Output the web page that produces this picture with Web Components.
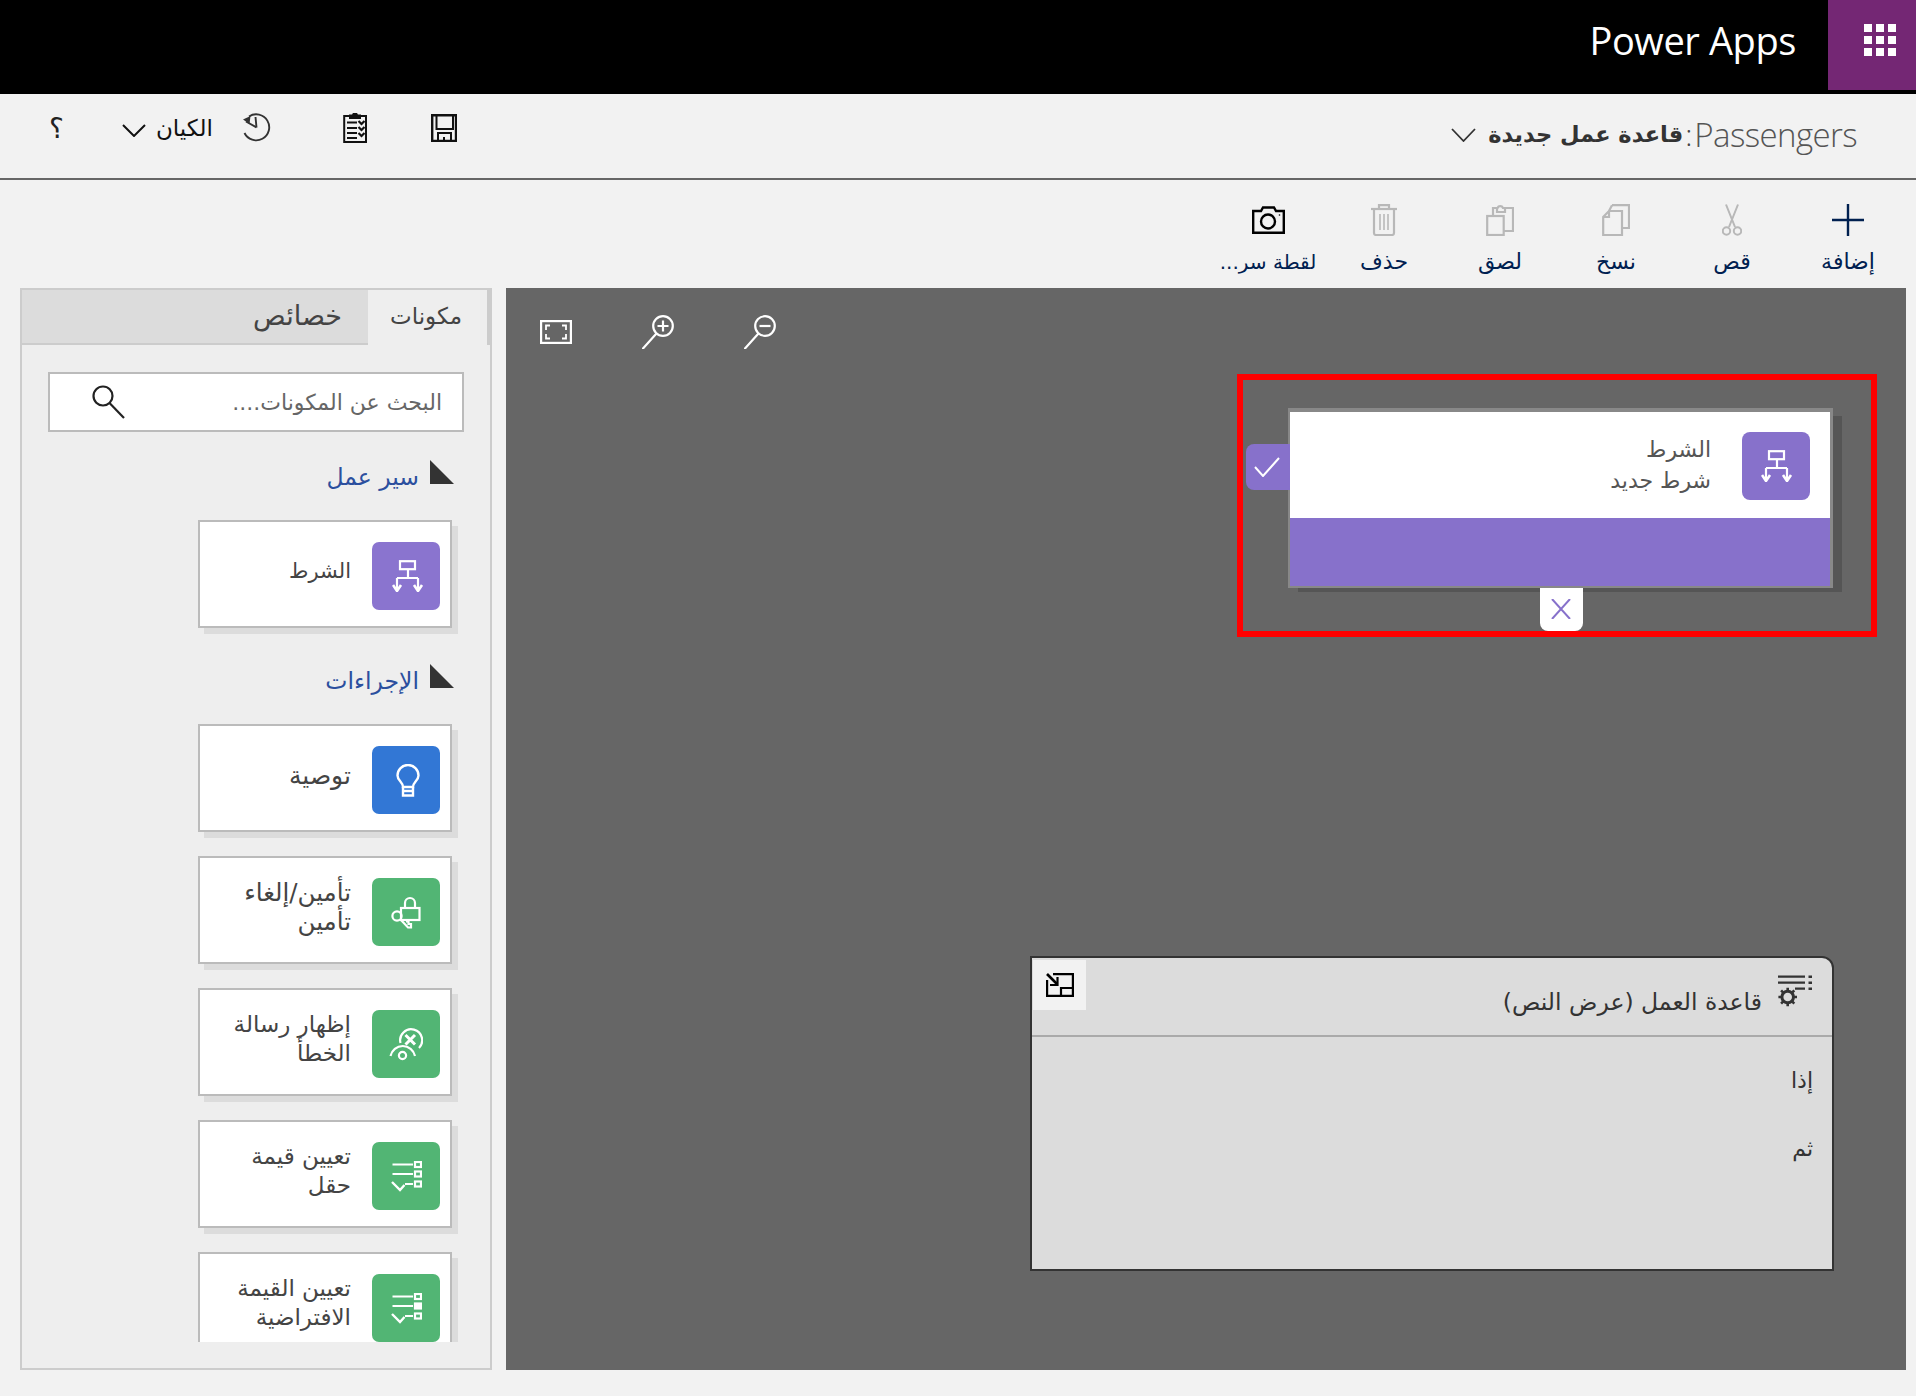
<!DOCTYPE html>
<html lang="ar">
<head>
<meta charset="utf-8">
<title>Power Apps</title>
<style>
  html, body { margin: 0; height: 100%; }
  body {
    width: 1916px;
    height: 1396px;
    overflow: hidden;
    background: #f2f2f2;
    font-family: 'DejaVu Sans', 'Open Sans', sans-serif;
  }
  svg { display: block; }
</style>
</head>
<body>
<pa-header>Power Apps</pa-header>

<pa-titlebar entity="Passengers" name="قاعدة عمل جديدة">
  <svg slot="tools" width="26" height="28" viewBox="0 0 26 28" fill="none" stroke="#111" stroke-width="2.4">
    <path d="M1.2 1.2H25V27H1.2Z"/>
    <path d="M5.5 1.2V15H22V1.2" stroke-width="2"/>
    <path d="M7 27V19H20V27M13 23V27" stroke-width="2"/>
  </svg>
  <svg slot="tools" width="24" height="30" viewBox="0 0 24 30" fill="none" stroke="#111" stroke-width="2">
    <path d="M7 3H1.2V29H23V3H17"/>
    <path d="M7 5V2.5H10A2 2 0 0 1 14 2.5H17V5Z" fill="#111"/>
    <path d="M4 9.5H14M4 15H14M4 20H14M4 25H14" stroke-width="1.8"/>
    <path d="M15.5 8l3 3 3-3M15.5 14l3 3 3-3M15.5 20l3 3 3-3" stroke-width="2.2"/>
  </svg>
  <svg slot="tools" style="margin-right: 7px" width="30" height="30" viewBox="0 0 30 30" fill="none" stroke="#333" stroke-width="1.9">
    <path d="M7 3.5A13 13 0 1 1 2.5 20"/>
    <path d="M14.5 14.5L13.5 4M14.5 14.5L4 8.5"/>
    <path d="M1 6.5L8.5 3L7.5 11Z" fill="#333" stroke="none"/>
  </svg>
  <span slot="entity">الكيان</span>
  <span slot="help">؟</span>
</pa-titlebar>

<pa-commandbar>
  <pa-command label="إضافة">
    <svg width="32" height="32" viewBox="0 0 32 32" stroke="#002050" stroke-width="2.4"><path d="M16 0V32M0 16H32"/></svg>
  </pa-command>
  <pa-command label="قص">
    <svg width="20" height="32" viewBox="0 0 20 32" fill="none" stroke="#b8b8b8" stroke-width="2">
      <path d="M4 0.5L13 23M16 0.5L7 23"/>
      <circle cx="4.5" cy="27" r="3.7"/>
      <circle cx="15.5" cy="27" r="3.7"/>
    </svg>
  </pa-command>
  <pa-command label="نسخ">
    <svg width="28" height="32" viewBox="0 0 28 32" fill="none" stroke="#b8b8b8" stroke-width="2.2">
      <path d="M10 1.2H27V24H20"/>
      <path d="M10 1.2L7 7"/>
      <path d="M7 7H20V31H1.2V13Z"/>
      <path d="M7 7V13H1.2"/>
    </svg>
  </pa-command>
  <pa-command label="لصق">
    <svg width="28" height="32" viewBox="0 0 28 32" fill="none" stroke="#b8b8b8" stroke-width="2.2">
      <path d="M7 12V4H11.5A3 3 0 0 1 17 4H27V27H18"/>
      <path d="M11 4V8H19V4"/>
      <rect x="1.2" y="12" width="16.5" height="19"/>
    </svg>
  </pa-command>
  <pa-command label="حذف">
    <svg width="26" height="32" viewBox="0 0 26 32" fill="none" stroke="#b8b8b8" stroke-width="2.2">
      <path d="M0 5H26"/>
      <path d="M8 5V1.2H18V5"/>
      <path d="M3 5V29A2 2 0 0 0 5 31H21A2 2 0 0 0 23 29V5"/>
      <path d="M9 10V26M13 10V26M17 10V26" stroke-width="1.6"/>
    </svg>
  </pa-command>
  <pa-command label="لقطة سر..." style="font-size: 20px">
    <svg width="33" height="28" viewBox="0 0 33 28" fill="none" stroke="#000" stroke-width="2.4">
      <path d="M1.2 5H9L11 1.5H22L24 5H31.8V26.8H1.2Z"/>
      <circle cx="16" cy="15.5" r="7"/>
      <circle cx="27.5" cy="9" r="0.8" fill="#000" stroke="none"/>
    </svg>
  </pa-command>
</pa-commandbar>

<pa-main>
  <pa-panel slot="panel">
    <pa-section title="سير عمل">
      <pa-card color="#8a74cf" text="الشرط" style="font-size: 21px">
        <svg style="margin-left: 3px" width="32" height="32" viewBox="0 0 32 32" fill="none" stroke="#fff" stroke-width="2.2">
          <rect x="8" y="1.2" width="15" height="8"/>
          <path d="M16 9V18M5 18H26M5 18V30M26 18V30"/>
          <path d="M1 25l4 6 4-6M22 25l4 6 4-6" stroke-width="2.6"/>
        </svg>
      </pa-card>
    </pa-section>
    <pa-section title="الإجراءات">
      <pa-card color="#3277d5" text="توصية" style="font-size: 25px">
        <svg style="margin-left: 3px" width="24" height="33" viewBox="0 0 24 33" fill="none" stroke="#fff" stroke-width="2.4">
          <path d="M7 23C7 18 1.5 16.5 1.5 11.5A10.5 10.5 0 0 1 22.5 11.5C22.5 16.5 17 18 17 23Z"/>
          <path d="M7 23V31.5H17V23M7 27H17"/>
        </svg>
      </pa-card>
      <pa-card color="#52b574" text="تأمين/إلغاء<br>تأمين" style="font-size: 24.5px">
        <svg width="30" height="33" viewBox="0 0 30 33" fill="none" stroke="#fff" stroke-width="2.2">
          <rect x="10" y="12" width="18.5" height="12"/>
          <path d="M14 12V7A5 5 0 0 1 24 7V12"/>
          <circle cx="6" cy="20" r="4.6"/>
          <path d="M9.5 23.5L17 31.5H20V28H17.5V25.5H15"/>
        </svg>
      </pa-card>
      <pa-card color="#52b574" text="إظهار رسالة<br>الخطأ">
        <svg width="34" height="33" viewBox="0 0 34 33" fill="none" stroke="#fff" stroke-width="2.2">
          <path d="M11.5 15A11 11 0 1 1 30 20"/>
          <path d="M16.5 7L26 16.5M26 7L16.5 16.5" stroke-width="3"/>
          <path d="M1.5 28A12.5 12.5 0 0 1 26 28"/>
          <circle cx="13.5" cy="27.5" r="3.6"/>
        </svg>
      </pa-card>
      <pa-card color="#52b574" text="تعيين قيمة<br>حقل">
        <svg width="31" height="31" viewBox="0 0 31 31" fill="none" stroke="#fff" stroke-width="2.2">
          <path d="M1.5 3.5H22M1.5 13H22M14 23H22"/>
          <path d="M1 21L9 29L13.5 24" stroke-width="2.4"/>
          <rect x="24" y="1" width="6" height="5"/>
          <rect x="24" y="10.5" width="6" height="5"/>
          <rect x="24" y="20.5" width="6" height="5"/>
        </svg>
      </pa-card>
      <pa-card color="#52b574" text="تعيين القيمة<br>الافتراضية">
        <svg width="31" height="31" viewBox="0 0 31 31" fill="none" stroke="#fff" stroke-width="2.2">
          <path d="M1.5 3.5H22M1.5 13H22M14 23H22"/>
          <path d="M1 21L9 29L13.5 24" stroke-width="2.4"/>
          <rect x="24" y="1" width="6" height="5"/>
          <rect x="24" y="10.5" width="6" height="5" fill="#fff"/>
          <rect x="24" y="20.5" width="6" height="5"/>
        </svg>
      </pa-card>
    </pa-section>
  </pa-panel>

  <pa-canvas slot="canvas">
    <pa-node title="الشرط" subtitle="شرط جديد">
      <svg style="margin-left: 2px" width="32" height="32" viewBox="0 0 32 32" fill="none" stroke="#fff" stroke-width="2.2">
        <rect x="8" y="1.2" width="15" height="8"/>
        <path d="M16 9V18M5 18H26M5 18V30M26 18V30"/>
        <path d="M1 25l4 6 4-6M22 25l4 6 4-6" stroke-width="2.6"/>
      </svg>
    </pa-node>
    <pa-rule title="قاعدة العمل (عرض النص)">
      <span>إذا</span>
      <span>ثم</span>
    </pa-rule>
  </pa-canvas>
</pa-main>

<script>
class PaHeader extends HTMLElement {
  constructor () {
    super()
    this.attachShadow({ mode: 'open' })
  }

  connectedCallback () {
    let cells = ''
    for (let y = 0; y < 3; y++) {
      for (let x = 0; x < 3; x++) {
        cells += `<rect x="${x * 12}" y="${y * 12}" width="8" height="8"/>`
      }
    }
    this.shadowRoot.innerHTML = /* html */`
      <style>
        :host {
          display: flex;
          justify-content: flex-end;
          height: 94px;
          background: #000;
          color: #fff;
        }
        .name {
          font: 38px/80px 'Open Sans', sans-serif;
          margin-right: 32px;
          letter-spacing: -0.4px;
        }
        .waffle {
          box-sizing: border-box;
          width: 88px;
          height: 90px;
          padding: 0 0 10px 16px;
          background: #742774;
          display: flex;
          align-items: center;
          justify-content: center;
        }
      </style>
      <div class="name"><slot></slot></div>
      <div class="waffle"><svg width="32" height="32" viewBox="0 0 32 32" fill="#fff">${cells}</svg></div>
    `
  }
}

class PaTitlebar extends HTMLElement {
  constructor () {
    super()
    this.attachShadow({ mode: 'open' })
  }

  connectedCallback () {
    this.shadowRoot.innerHTML = /* html */`
      <style>
        :host {
          display: flex;
          justify-content: space-between;
          box-sizing: border-box;
          height: 86px;
          border-bottom: 2px solid #666;
          background: #f2f2f2;
        }
        .left {
          display: flex;
          flex-direction: row-reverse;
          align-items: center;
          padding: 0 0 16px 49px;
        }
        .tools { display: flex; flex-direction: row-reverse; align-items: center; gap: 64px; margin-left: 29px; }
        ::slotted(svg) { display: block; }
        .entity { display: flex; direction: rtl; align-items: center; gap: 10px; font-size: 23px; color: #111; }
        .entity svg { margin-top: 4px; }
        .help { font-size: 28px; color: #222; margin-right: 58px; }
        .right {
          direction: rtl;
          display: flex;
          align-items: center;
          padding-right: 59px;
          padding-bottom: 4px;
          color: #333;
        }
        .entity-name { font: 300 33px 'Open Sans', sans-serif; color: #555; letter-spacing: -0.6px; }
        .colon { font: 300 30px 'Open Sans', sans-serif; color: #444; margin: 0 2px; }
        .rule-name { font-size: 22.5px; font-weight: 700; color: #333; }
        .right svg { margin-right: 12px; margin-top: 2px; }
      </style>
      <div class="left">
        <div class="tools"><slot name="tools"></slot></div>
        <div class="entity">
          <slot name="entity"></slot>
          <svg width="24" height="13" viewBox="0 0 24 13" fill="none" stroke="#111" stroke-width="2"><path d="M1 1L12 12L23 1"/></svg>
        </div>
        <div class="help"><slot name="help"></slot></div>
      </div>
      <div class="right">
        <span class="entity-name">${this.getAttribute('entity')}</span>
        <span class="colon">:</span>
        <span class="rule-name">${this.getAttribute('name')}</span>
        <svg width="25" height="14" viewBox="0 0 25 14" fill="none" stroke="#333" stroke-width="1.8"><path d="M1 1L12.5 13L24 1"/></svg>
      </div>
    `
  }
}

class PaCommandbar extends HTMLElement {
  constructor () {
    super()
    this.attachShadow({ mode: 'open' })
  }

  connectedCallback () {
    this.shadowRoot.innerHTML = /* html */`
      <style>
        :host {
          display: flex;
          direction: rtl;
          box-sizing: border-box;
          height: 108px;
          padding-right: 10px;
        }
      </style>
      <slot></slot>
    `
  }
}

class PaCommand extends HTMLElement {
  constructor () {
    super()
    this.attachShadow({ mode: 'open' })
  }

  connectedCallback () {
    this.shadowRoot.innerHTML = /* html */`
      <style>
        :host {
          display: flex;
          flex-direction: column;
          align-items: center;
          width: 116px;
          padding-top: 23px;
          box-sizing: border-box;
          font-size: 22px;
        }
        .icon { height: 34px; display: flex; align-items: center; }
        .label {
          margin-top: 11px;
          line-height: 28px;
          color: #002050;
          white-space: nowrap;
        }
      </style>
      <div class="icon"><slot></slot></div>
      <div class="label">${this.getAttribute('label')}</div>
    `
  }
}

class PaMain extends HTMLElement {
  constructor () {
    super()
    this.attachShadow({ mode: 'open' })
  }

  connectedCallback () {
    this.shadowRoot.innerHTML = /* html */`
      <style>
        :host {
          display: flex;
          gap: 14px;
          height: 1082px;
          padding: 0 10px 0 20px;
        }
        ::slotted([slot=panel]) { flex: 0 0 472px; }
        ::slotted([slot=canvas]) { flex: 1; }
      </style>
      <slot name="panel"></slot>
      <slot name="canvas"></slot>
    `
  }
}

class PaPanel extends HTMLElement {
  constructor () {
    super()
    this.attachShadow({ mode: 'open' })
  }

  connectedCallback () {
    this.shadowRoot.innerHTML = /* html */`
      <style>
        :host {
          display: flex;
          flex-direction: column;
          direction: rtl;
          box-sizing: border-box;
          border: 2px solid #ccc;
          background: #eee;
        }
        .tabs {
          display: flex;
          height: 53px;
          flex: none;
          background: #dcdcdc;
          border-bottom: 2px solid #ccc;
          box-sizing: content-box;
        }
        .tab { line-height: 52px; color: #444; }
        .tab.on {
          width: 122px;
          font-size: 23px;
          box-sizing: border-box;
          margin-bottom: -2px;
          padding-right: 25px;
          background: #eee;
          border-right: 3px solid #ccc;
        }
        .tab.off { font-size: 27px; padding-right: 26px; }
        .search {
          flex: none;
          display: flex;
          align-items: center;
          justify-content: space-between;
          box-sizing: border-box;
          height: 60px;
          margin: 27px 26px 0 26px;
          padding: 0 20px 0 42px;
          background: #fff;
          border: 2px solid #bbb;
          font-size: 22px;
          color: #666;
        }
        .list {
          flex: 1;
          min-height: 0;
          margin-bottom: 26px;
          overflow: hidden;
          padding-top: 26px;
        }
      </style>
      <div class="tabs">
        <div class="tab on">مكونات</div>
        <div class="tab off">خصائص</div>
      </div>
      <div class="search">
        <span>البحث عن المكونات....</span>
        <svg width="34" height="34" viewBox="0 0 34 34" fill="none" stroke="#222" stroke-width="2.2">
          <circle cx="11" cy="11" r="9.5"/>
          <path d="M17.5 18L32 33"/>
        </svg>
      </div>
      <div class="list"><slot></slot></div>
    `
  }
}

class PaSection extends HTMLElement {
  constructor () {
    super()
    this.attachShadow({ mode: 'open' })
  }

  connectedCallback () {
    this.shadowRoot.innerHTML = /* html */`
      <style>
        :host { display: block; margin-bottom: 34px; }
        .head {
          display: flex;
          align-items: flex-end;
          gap: 11px;
          height: 30px;
          padding-right: 36px;
          margin-bottom: 32px;
        }
        .head svg { flex: none; margin-bottom: 4px; }
        .title { font-size: 23.5px; line-height: 30px; color: #2b4f9e; margin-bottom: -4px; }
        .cards { display: flex; flex-direction: column; gap: 24px; padding-right: 38px; }
      </style>
      <div class="head">
        <svg width="24" height="24" viewBox="0 0 24 24" fill="#333"><path d="M0 0V24H24Z"/></svg>
        <div class="title">${this.getAttribute('title')}</div>
      </div>
      <div class="cards"><slot></slot></div>
    `
  }
}

class PaCard extends HTMLElement {
  constructor () {
    super()
    this.attachShadow({ mode: 'open' })
  }

  connectedCallback () {
    this.shadowRoot.innerHTML = /* html */`
      <style>
        :host {
          display: flex;
          flex: none;
          gap: 21px;
          box-sizing: border-box;
          width: 254px;
          height: 108px;
          padding: 20px 10px 0 0;
          background: #fff;
          border: 2px solid #bbb;
          box-shadow: 6px 6px 0 #dcdcdc;
          font-size: 23px;
        }
        .tile {
          flex: none;
          width: 68px;
          height: 68px;
          border-radius: 7px;
          background: ${this.getAttribute('color')};
          display: flex;
          align-items: center;
          justify-content: center;
        }
        .text {
          align-self: center;
          margin-top: -20px;
          margin-bottom: 6px;
          line-height: 29px;
          color: #444;
        }
      </style>
      <div class="tile"><slot></slot></div>
      <div class="text">${this.getAttribute('text')}</div>
    `
  }
}

class PaCanvas extends HTMLElement {
  constructor () {
    super()
    this.attachShadow({ mode: 'open' })
  }

  connectedCallback () {
    this.shadowRoot.innerHTML = /* html */`
      <style>
        :host {
          display: block;
          position: relative;
          background: #666;
        }
        .tools {
          display: flex;
          align-items: center;
          gap: 70px;
          padding: 27px 0 0 34px;
        }
      </style>
      <div class="tools">
        <svg width="32" height="24" viewBox="0 0 32 24" fill="none" stroke="#fff" stroke-width="2">
          <rect x="1" y="1" width="30" height="22" stroke-width="2.4"/>
          <path d="M6 10V5.5H10M22 5.5H26V10M26 14V18.5H22M10 18.5H6V14" stroke-width="1.8"/>
        </svg>
        <svg width="32" height="34" viewBox="0 0 32 34" fill="none" stroke="#fff" stroke-width="2.2">
          <circle cx="21" cy="11" r="9.8"/>
          <path d="M14 19L1 33.5" stroke-linecap="round"/>
          <path d="M21 5.5V16.5M15.5 11H26.5"/>
        </svg>
        <svg width="32" height="34" viewBox="0 0 32 34" fill="none" stroke="#fff" stroke-width="2.2">
          <circle cx="21" cy="11" r="9.8"/>
          <path d="M14 19L1 33.5" stroke-linecap="round"/>
          <path d="M15.5 11H26.5"/>
        </svg>
      </div>
      <slot></slot>
    `
  }
}

class PaNode extends HTMLElement {
  constructor () {
    super()
    this.attachShadow({ mode: 'open' })
  }

  connectedCallback () {
    this.shadowRoot.innerHTML = /* html */`
      <style>
        :host {
          position: absolute;
          z-index: 0;
          left: 731px;
          top: 86px;
          box-sizing: border-box;
          width: 640px;
          height: 263px;
          border: 6px solid #f00;
          padding: 28px 0 0 45px;
        }
        .card {
          position: relative;
          box-sizing: border-box;
          width: 545px;
          height: 180px;
          display: flex;
          flex-direction: column;
          direction: rtl;
          border-style: solid;
          border-color: #888;
          border-width: 4px 3px 2px 2px;
        }
        .shade {
          position: absolute;
          z-index: -1;
          inset: 4px -12px -6px 8px;
          background: #555;
        }
        .body {
          flex: 0 0 106px;
          display: flex;
          gap: 31px;
          padding: 20px 20px 0 0;
          box-sizing: border-box;
          background: #fff;
        }
        .tile {
          flex: none;
          width: 68px;
          height: 68px;
          border-radius: 8px;
          background: #8771cb;
          display: flex;
          align-items: center;
          justify-content: center;
        }
        .text {
          font-size: 22px;
          line-height: 31px;
          color: #555;
          margin-top: 2px;
        }
        .band { flex: 1; background: #8771cb; }
        .accept {
          position: absolute;
          right: 100%;
          top: 32px;
          width: 44px;
          height: 46px;
          border-radius: 8px 0 0 8px;
          background: #8771cb;
          display: flex;
          align-items: center;
          justify-content: center;
        }
        .accept svg { margin-right: 2px; }
        .cancel {
          position: absolute;
          left: 250px;
          top: 100%;
          margin-top: 2px;
          width: 43px;
          height: 43px;
          border-radius: 0 0 8px 8px;
          background: #fff;
          display: flex;
          align-items: center;
          justify-content: center;
        }
        .cancel svg { margin-right: 2px; margin-bottom: 2px; }
      </style>
      <div class="card">
        <div class="shade"></div>
        <div class="body">
          <div class="tile"><slot></slot></div>
          <div class="text">${this.getAttribute('title')}<br>${this.getAttribute('subtitle')}</div>
        </div>
        <div class="band"></div>
        <div class="accept">
          <svg width="26" height="20" viewBox="0 0 26 20" fill="none" stroke="#fff" stroke-width="2"><path d="M1 10L9 19L25 1"/></svg>
        </div>
        <div class="cancel">
          <svg width="20" height="20" viewBox="0 0 20 20" fill="none" stroke="#8771cb" stroke-width="2"><path d="M1 0L19 20M19 0L1 20"/></svg>
        </div>
      </div>
    `
  }
}

class PaRule extends HTMLElement {
  constructor () {
    super()
    this.attachShadow({ mode: 'open' })
  }

  connectedCallback () {
    this.shadowRoot.innerHTML = /* html */`
      <style>
        :host {
          position: absolute;
          left: 524px;
          top: 668px;
          box-sizing: border-box;
          width: 804px;
          height: 315px;
          display: flex;
          flex-direction: column;
          background: #dcdcdc;
          border: 2px solid #333;
          border-top-right-radius: 12px;
        }
        .head {
          flex: 0 0 79px;
          box-sizing: border-box;
          display: flex;
          direction: rtl;
          justify-content: space-between;
          padding: 2px 19px 0 1px;
          border-bottom: 2px solid #aaa;
        }
        .title { display: flex; gap: 16px; }
        .title svg { margin-top: 15px; flex: none; }
        .text { margin-top: 26px; font-size: 23.5px; line-height: 32px; color: #333; }
        .expand {
          width: 53px;
          height: 50px;
          background: #f2f2f2;
          display: flex;
          align-items: center;
          justify-content: center;
        }
        .body {
          display: flex;
          flex-direction: column;
          gap: 38px;
          direction: rtl;
          padding: 29px 19px 0 0;
          font-size: 22px;
          line-height: 30px;
          color: #333;
        }
      </style>
      <div class="head">
        <div class="title">
          <svg width="35" height="33" viewBox="0 0 35 33" fill="none" stroke="#333">
            <path d="M0 1.7H27M0 7.7H27M17 13.7H27" stroke-width="2.2"/>
            <path d="M30.5 1.7H34M30.5 7.7H34M30.5 13.7H34" stroke-width="2.6"/>
            <circle cx="9.7" cy="22" r="5.8" stroke-width="3"/>
            <path d="M9.7 12.7V16M9.7 28V31.3M.4 22H3.7M15.7 22H19M3.1 15.4L5.5 17.8M13.9 26.2L16.3 28.6M16.3 15.4L13.9 17.8M5.5 26.2L3.1 28.6" stroke-width="2.6"/>
          </svg>
          <div class="text">${this.getAttribute('title')}</div>
        </div>
        <div class="expand">
          <svg width="28" height="24" viewBox="0 0 28 24" fill="none" stroke="#000" stroke-width="2.2">
            <path d="M7 1.1H26.9V22.9H1.1V7"/>
            <path d="M15 22.9V15H26.9"/>
            <path d="M1 1L11 11" stroke-width="2.6"/>
            <path d="M11.5 4V12H4" stroke-width="2.2"/>
          </svg>
        </div>
      </div>
      <div class="body"><slot></slot></div>
    `
  }
}

customElements.define('pa-header', PaHeader)
customElements.define('pa-titlebar', PaTitlebar)
customElements.define('pa-commandbar', PaCommandbar)
customElements.define('pa-command', PaCommand)
customElements.define('pa-main', PaMain)
customElements.define('pa-panel', PaPanel)
customElements.define('pa-section', PaSection)
customElements.define('pa-card', PaCard)
customElements.define('pa-canvas', PaCanvas)
customElements.define('pa-node', PaNode)
customElements.define('pa-rule', PaRule)
</script>
</body>
</html>
